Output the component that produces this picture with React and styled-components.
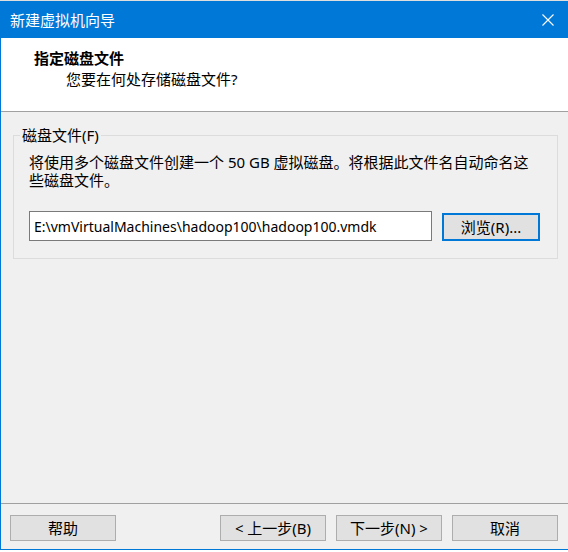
import React from "react";
import styled, { createGlobalStyle } from "styled-components";

const GlobalStyle = createGlobalStyle`
  html, body {
    margin: 0;
    padding: 0;
    background: #ffffff;
  }
  body {
    font-family: "Noto Sans", "Noto Sans CJK SC", sans-serif;
    font-size: 15px;
    color: #000000;
  }
`;

const WIZARD_BLUE = "#0078d7";

function App() {
  return (
    <>
      <GlobalStyle />
      <Page>
        <TopEdge />
        <TitleBar>
          <TitleText>新建虚拟机向导</TitleText>
          <CloseIcon viewBox="0 0 12 12" aria-label="关闭">
            <path d="M0.5 0.5 L11.5 11.5 M11.5 0.5 L0.5 11.5" />
          </CloseIcon>
        </TitleBar>
        <Frame>
          <Header>
            <HeaderTitle>指定磁盘文件</HeaderTitle>
            <HeaderSubtitle>您要在何处存储磁盘文件?</HeaderSubtitle>
          </Header>
          <Separator />
          <Body>
            <GroupBox>
              <GroupLegend>磁盘文件(F)</GroupLegend>
              <Description>
                将使用多个磁盘文件创建一个 50 GB 虚拟磁盘。将根据此文件名自动命名这
                <br />
                些磁盘文件。
              </Description>
              <FileRow>
                <PathInput
                  type="text"
                  defaultValue="E:\vmVirtualMachines\hadoop100\hadoop100.vmdk"
                />
                <Button $focused $width={98} $height={28}>
                  浏览(R)...
                </Button>
              </FileRow>
            </GroupBox>
          </Body>
          <Separator />
          <Footer>
            <Button $width={106}>帮助</Button>
            <NavGroup>
              <Button $width={106}>&lt; 上一步(B)</Button>
              <Button $width={106}>下一步(N) &gt;</Button>
              <Button $width={106}>取消</Button>
            </NavGroup>
          </Footer>
        </Frame>
      </Page>
    </>
  );
}

const Page = styled.div`
  width: 568px;
  height: 552px;
  display: flex;
  flex-direction: column;
  background: #ffffff;
  overflow: hidden;
`;

const TopEdge = styled.div`
  height: 1px;
  background: #dedede;
`;

const TitleBar = styled.div`
  height: 37px;
  background: ${WIZARD_BLUE};
  display: flex;
  align-items: center;
  justify-content: space-between;
  padding: 0 14px 0 10px;
  box-sizing: border-box;
`;

const TitleText = styled.span`
  color: #ffffff;
  font-size: 15px;
  line-height: 20px;
`;

const CloseIcon = styled.svg`
  width: 12px;
  height: 12px;
  margin-top: 1px;
  stroke: #ffffff;
  stroke-width: 1.1;
  fill: none;
`;

const Frame = styled.div`
  height: 512px;
  display: flex;
  flex-direction: column;
  background: #f0f0f0;
  border-left: 1px solid ${WIZARD_BLUE};
  border-bottom: 1px solid ${WIZARD_BLUE};
  box-sizing: border-box;
`;

const Header = styled.div`
  height: 73px;
  background: #ffffff;
  padding: 10px 0 0 33px;
  box-sizing: border-box;
  display: flex;
  flex-direction: column;
`;

const HeaderTitle = styled.div`
  font-weight: bold;
  line-height: 20px;
`;

const HeaderSubtitle = styled.div`
  margin: 1px 0 0 32px;
  line-height: 20px;
`;

const Separator = styled.div`
  height: 1px;
  background: #a0a0a0;
  flex-shrink: 0;
`;

const Body = styled.div`
  flex: 1;
  padding: 14px 10px 0 12px;
`;

const GroupBox = styled.fieldset`
  margin: 0;
  width: 545px;
  box-sizing: border-box;
  border: 1px solid #dcdcdc;
  padding: 9px 15px 17px 15px;
`;

const GroupLegend = styled.legend`
  margin-left: -9px;
  padding: 0 2px;
  line-height: 18px;
`;

const Description = styled.div`
  line-height: 18px;
  white-space: nowrap;
`;

const FileRow = styled.div`
  display: flex;
  align-items: flex-end;
  gap: 10px;
  margin-top: 22px;
`;

const PathInput = styled.input`
  width: 403px;
  height: 30px;
  box-sizing: border-box;
  margin: 0;
  border: 1px solid #7a7a7a;
  background: #ffffff;
  padding: 0 4px;
  font-family: inherit;
  font-size: 14px;
  color: #000000;
  outline: none;
`;

const Button = styled.button`
  width: ${(p) => p.$width}px;
  height: ${(p) => p.$height || 26}px;
  box-sizing: border-box;
  margin: 0;
  padding: 0;
  background: #e1e1e1;
  border: ${(p) => (p.$focused ? `2px solid ${WIZARD_BLUE}` : "1px solid #adadad")};
  font-family: inherit;
  font-size: 15px;
  color: #000000;
  line-height: 18px;
`;

const Footer = styled.div`
  height: 45px;
  box-sizing: border-box;
  padding: 11px 10px 0 9px;
  display: flex;
  justify-content: space-between;
  align-items: flex-start;
`;

const NavGroup = styled.div`
  display: flex;
  gap: 10px;
`;

export default App;
